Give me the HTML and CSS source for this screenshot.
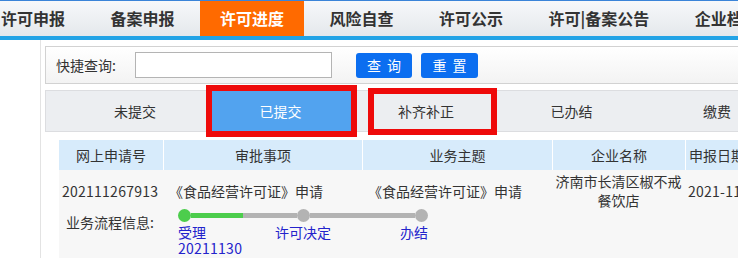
FILE: index.html
```html
<!DOCTYPE html>
<html lang="zh-CN">
<head>
<meta charset="utf-8">
<title>许可进度</title>
<link rel="stylesheet" href="styles.css">
</head>
<body>
<div class="page">
  <nav class="topnav">
    <ul class="nav-list">
      <li class="nav-item">许可申报</li>
      <li class="nav-item">备案申报</li>
      <li class="nav-item active">许可进度</li>
      <li class="nav-item">风险自查</li>
      <li class="nav-item">许可公示</li>
      <li class="nav-item">许可|备案公告</li>
      <li class="nav-item">企业档案</li>
    </ul>
  </nav>
  <div class="main">
    <aside class="sidebar"></aside>
    <section class="content">
      <div class="search">
        <span class="search-label">快捷查询:</span>
        <input class="search-input" type="text">
        <button class="btn btn-query">查询</button>
        <button class="btn btn-reset">重置</button>
      </div>
      <div class="tabs">
        <div class="tab">未提交</div>
        <div class="tab active">已提交</div>
        <div class="tab">补齐补正</div>
        <div class="tab">已办结</div>
        <div class="tab">缴费</div>
      </div>
      <div class="table">
        <div class="thead">
          <div class="th">网上申请号</div>
          <div class="th">审批事项</div>
          <div class="th">业务主题</div>
          <div class="th">企业名称</div>
          <div class="th th-date">申报日期</div>
        </div>
        <div class="tbody">
          <div class="row">
            <div class="td td-no num">202111267913</div>
            <div class="td td-left">《食品经营许可证》申请</div>
            <div class="td td-left">《食品经营许可证》申请</div>
            <div class="td td-name">济南市长清区椒不戒餐饮店</div>
            <div class="td td-date num">2021-11-30</div>
          </div>
          <div class="flow">
            <span class="flow-label">业务流程信息:</span>
            <div class="track">
              <span class="dot done"></span>
              <span class="seg half"></span>
              <span class="dot"></span>
              <span class="seg"></span>
              <span class="dot"></span>
              <span class="step step-1">受理<br><span class="num">20211130</span></span>
              <span class="step step-2">许可决定</span>
              <span class="step step-3">办结</span>
            </div>
          </div>
        </div>
      </div>
    </section>
  </div>
  <div class="mark mark-1"></div>
  <div class="mark mark-2"></div>
</div>
</body>
</html>
```
FILE: styles.css
```css
* { box-sizing: border-box; }
html, body { margin: 0; padding: 0; }
body {
  width: 738px;
  height: 258px;
  overflow: hidden;
  background: #fff;
  font-family: "Noto Sans CJK SC", "Microsoft YaHei", sans-serif;
  font-size: 14px;
  color: #333;
}
.page { position: relative; width: 738px; height: 258px; overflow: hidden; }
.num { letter-spacing: 0.25px; }

.topnav {
  height: 40px;
  border-top: 1px solid #3b84d8;
  border-bottom: 4px solid #22a3e6;
  background: linear-gradient(#f7f8fa, #e4e8ec);
  overflow: hidden;
}
.nav-list {
  list-style: none;
  margin: 0 0 0 -19px;
  padding: 0;
  display: flex;
  gap: 5.5px;
  white-space: nowrap;
}
.nav-item {
  flex: none;
  padding: 0 20px;
  height: 35px;
  line-height: 35px;
  font-size: 16px;
  font-weight: bold;
  color: #333;
}
.nav-item.active { background: #ff6a00; color: #fff; }

.main { display: flex; height: 218px; }
.sidebar { flex: none; width: 41px; border-right: 1px solid #e3e3e3; }
.content { flex: 1; min-width: 0; padding: 6px 0 0 4px; }

.search {
  height: 38px;
  border: 1px solid #d2d2d2;
  border-right: none;
  background: linear-gradient(#ffffff, #f3f3f3);
  display: flex;
  align-items: center;
  padding-left: 10px;
}
.search-label { line-height: 20px; }
.search-input {
  margin: 0 0 0 19px;
  width: 197px;
  height: 26px;
  border: 1px solid #b4b4b4;
  background: #fff;
  padding: 0;
}
.btn {
  height: 25px;
  border: none;
  border-radius: 3px;
  background: #0b6ef0;
  color: #fff;
  font-family: inherit;
  font-size: 14px;
  line-height: 25px;
  letter-spacing: 6px;
  padding: 0 0 0 6px;
  width: 56px;
  margin-top: 1px;
}
.btn-query { margin-left: 24px; }
.btn-reset { margin-left: 9px; width: 57px; }

.tabs {
  margin-top: 6px;
  height: 42px;
  border: 1px solid #dcdde0;
  border-right: none;
  background: #eceef1;
  display: flex;
  gap: 5.5px;
  padding-left: 19px;
}
.tab {
  flex: none;
  width: 140px;
  line-height: 40px;
  text-align: center;
  color: #333;
}
.tab.active { background: #52a3ef; color: #fff; }

.table { margin: 8px 0 0 14px; }
.thead {
  display: grid;
  grid-template-columns: 104px 199px 190px 133px 120px;
  height: 30px;
  background: #d7ebfb;
}
.th {
  line-height: 30px;
  text-align: center;
  white-space: nowrap;
  border-left: 1px solid #fff;
}
.th:first-child { border-left: none; }
.th-date { text-align: left; padding-left: 3px; }
.tbody { background: #f7f7f7; height: 88px; }
.row {
  display: grid;
  grid-template-columns: 104px 199px 190px 133px 120px;
  height: 38px;
  padding-top: 2px;
  align-items: center;
}
.td { line-height: 19px; white-space: nowrap; }
.td-no { padding-left: 3px; }
.td-left { padding-left: 6px; }
.td-name { white-space: normal; text-align: center; }
.td-date { padding-left: 3px; }

.flow { display: flex; align-items: flex-start; }
.flow-label { margin: 3.5px 0 0 7px; line-height: 20px; width: 112px; flex: none; }
.track {
  display: grid;
  grid-template-columns: 13px 1fr 13px 1fr 13px;
  grid-template-rows: 13px auto;
  width: 250px;
  margin-top: 1px;
}
.dot {
  grid-row: 1;
  width: 13px;
  height: 13px;
  border-radius: 50%;
  background: #b3b3b3;
}
.dot.done { background: #4ccd4c; }
.seg { grid-row: 1; align-self: center; height: 5px; background: #b3b3b3; }
.seg.half { background: linear-gradient(to right, #4ccd4c 49.5%, #b3b3b3 49.5%); }
.step {
  grid-row: 2;
  margin-top: 2px;
  line-height: 16px;
  color: #2323cc;
  white-space: nowrap;
}
.step-1 { grid-column: 1 / 3; text-align: left; }
.step-2 { grid-column: 2 / 5; text-align: center; }
.step-3 { grid-column: 4 / 6; text-align: right; }

.mark { position: absolute; border: 6px solid #ee0a0a; }
.mark-1 { left: 206px; top: 85px; width: 151px; height: 52px; }
.mark-2 { left: 368px; top: 88px; width: 129px; height: 47px; }
```
